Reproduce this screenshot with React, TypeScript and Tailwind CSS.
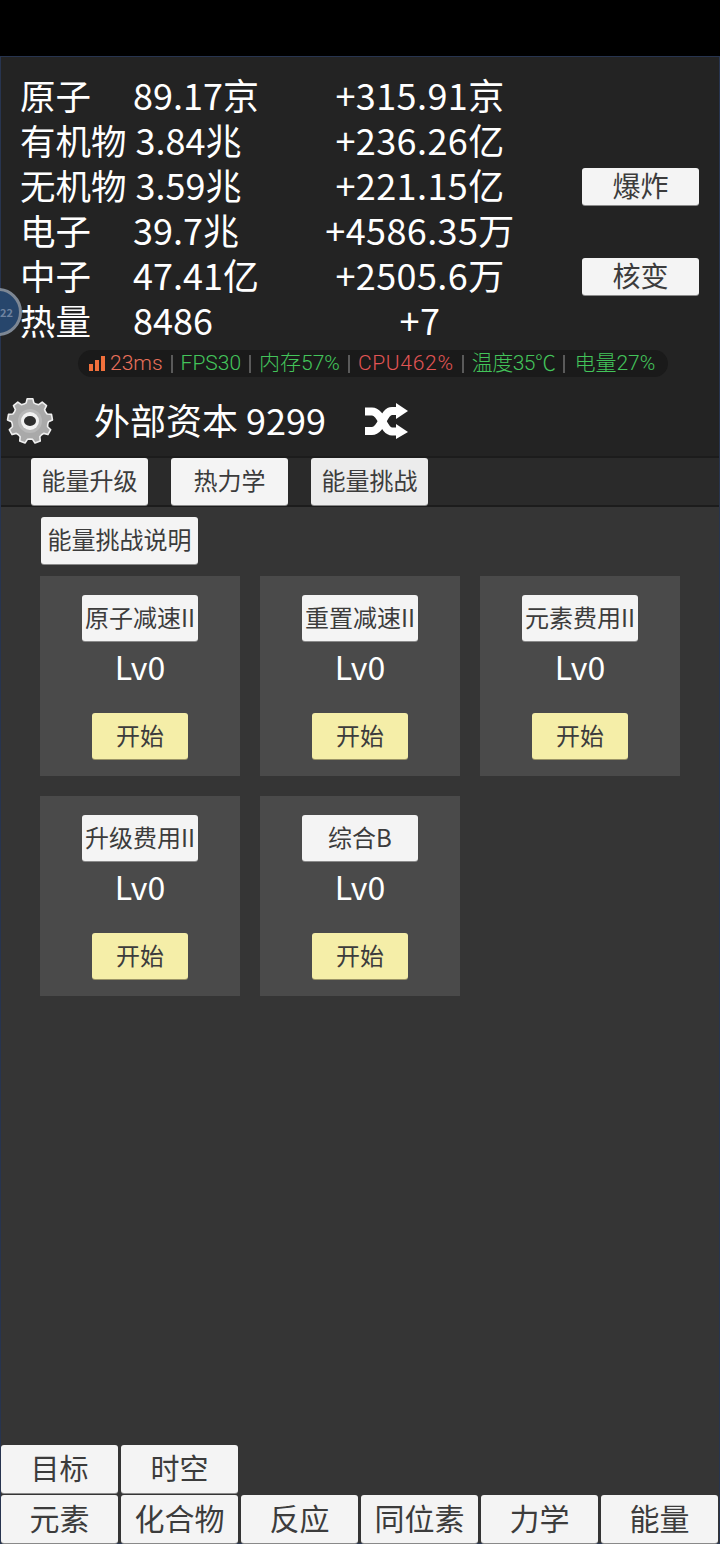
const font = { fontFamily: '"Noto Sans CJK SC", "Noto Sans", sans-serif' };
const statusFont = { fontFamily: 'Roboto, "Noto Sans CJK SC", sans-serif' };

const rows = [
  { label: "原子", value: "89.17京", rate: "+315.91京" },
  { label: "有机物", value: "3.84兆", rate: "+236.26亿" },
  { label: "无机物", value: "3.59兆", rate: "+221.15亿", action: "爆炸" },
  { label: "电子", value: "39.7兆", rate: "+4586.35万" },
  { label: "中子", value: "47.41亿", rate: "+2505.6万", action: "核变" },
  { label: "热量", value: "8486", rate: "+7" },
];

const cards = ["原子减速II", "重置减速II", "元素费用II", "升级费用II", "综合B"];

function gearPoints() {
  const pts: string[] = [];
  const teeth = 9;
  const s = (Math.PI * 2) / teeth;
  for (let i = 0; i < teeth; i++) {
    const a = i * s - Math.PI / 2;
    const p = (r: number, t: number) => {
      const x = 24 + r * Math.cos(a + t * s);
      const y = 24 + r * Math.sin(a + t * s);
      return x.toFixed(2) + "," + y.toFixed(2);
    };
    pts.push(p(18, -0.5), p(18.5, -0.3), p(22.5, -0.18), p(22.5, 0.18), p(18.5, 0.3));
  }
  return pts.join(" ");
}

function Gear() {
  return (
    <svg width="48" height="48" viewBox="0 0 48 48" className="mt-[4px]">
      <polygon points={gearPoints()} fill="#a9a9a9" stroke="#efefef" strokeWidth="1.6" strokeLinejoin="round" />
      <circle cx="24" cy="24" r="12" fill="#b8b8b8" />
      <circle cx="24" cy="24" r="9" fill="#f2f2f2" />
      <ellipse cx="24" cy="24" rx="6" ry="5" fill="#2e2e2e" />
    </svg>
  );
}

function Shuffle() {
  return (
    <svg width="44" height="36" viewBox="0 0 44 36" className="mt-[4px]">
      <path d="M0 8.5h7c10 0 11 20 20 20h6" fill="none" stroke="#fff" strokeWidth="8" />
      <path d="M0 28h7c10 0 11-20 20-20h6" fill="none" stroke="#fff" strokeWidth="8" />
      <path d="M31 0l12 8-12 8zM31 21l12 8-12 7z" fill="#fff" />
    </svg>
  );
}

function Btn({ children, className, color = "bg-[#f4f4f4]" }: { children: React.ReactNode; className: string; color?: string }) {
  return (
    <div className={"flex items-center justify-center rounded-[3px] pb-[3px] text-[#3c3c3c] whitespace-nowrap shadow-[0_1px_0_#8a8a8a] " + color + " " + className}>
      {children}
    </div>
  );
}

function Sep() {
  return <span className="mx-[8px] h-[18px] w-[2px] bg-[#5a5a5a]" />;
}

export default function App() {
  return (
    <div className="relative flex h-[1544px] w-[720px] flex-col overflow-hidden bg-black" style={font}>
      <div className="h-[56px] shrink-0 bg-black" />
      <div className="flex min-h-0 flex-1 flex-col border border-[#27344f] bg-[#232323]">
        <div className="flex flex-col pt-[15px]">
          {rows.map((r) => (
            <div key={r.label} className="flex h-[45px] items-center pl-[19px] text-[36px] leading-[45px] text-white">
              <div className="flex w-[283px] items-center">
                <div className="min-w-[113px] whitespace-nowrap pr-[9px] text-[35.5px]">{r.label}</div>
                <div className="whitespace-nowrap">{r.value}</div>
              </div>
              <div className="ml-[2px] w-[230px] whitespace-nowrap text-center tracking-[0.4px]">{r.rate}</div>
              {r.action ? (
                <Btn className="ml-[47px] mt-[4px] h-[37px] w-[117px] text-[28px]">{r.action}</Btn>
              ) : null}
            </div>
          ))}
        </div>

        <div className="ml-[77px] mt-[8px] flex h-[27px] w-[590px] items-center whitespace-nowrap rounded-full bg-[#1a1a1a] pl-[11px] text-[21px] font-light" style={statusFont}>
          <svg width="17" height="15" viewBox="0 0 17 15" className="mr-[4px]">
            <rect x="0" y="8" width="4" height="7" fill="#f0703c" />
            <rect x="6" y="4" width="4" height="11" fill="#f0703c" />
            <rect x="12" y="0" width="4" height="15" fill="#f0703c" />
          </svg>
          <span className="text-[#e8705a]">23ms</span>
          <Sep />
          <span className="text-[#43c45a]">FPS30</span>
          <Sep />
          <span className="text-[#43c45a]">内存57%</span>
          <Sep />
          <span className="tracking-[0.7px] text-[#e25555]">CPU462%</span>
          <Sep />
          <span className="tracking-[-0.5px] text-[#43c45a]">温度35℃</span>
          <Sep />
          <span className="ml-[1px] text-[#43c45a]">电量27%</span>
        </div>

        <div className="flex h-[79px] items-center pl-[5px] pt-[5px]">
          <Gear />
          <span className="ml-[40px] text-[36px] leading-[45px] text-white">外部资本 9299</span>
          <span className="ml-[39px]"><Shuffle /></span>
        </div>

        <div className="flex h-[51px] gap-[23px] border-y-[2px] border-[#1c1c1c] bg-[#2a2a2a] pl-[30px]">
          <Btn className="h-[47px] w-[117px] text-[24px]">能量升级</Btn>
          <Btn className="h-[47px] w-[117px] text-[24px]">热力学</Btn>
          <Btn color="bg-[#ececec]" className="h-[47px] w-[117px] text-[24px]">能量挑战</Btn>
        </div>

        <div className="flex min-h-0 flex-1 flex-col bg-[#353535]">
          <div className="pl-[40px] pt-[10px]">
            <Btn className="h-[47px] w-[157px] text-[24px]">能量挑战说明</Btn>
          </div>
          <div className="mt-[12px] grid flex-1 auto-rows-[200px] grid-cols-[200px_200px_200px] content-start gap-[20px] pl-[39px]">
            {cards.map((c) => (
              <div key={c} className="flex flex-col items-center bg-[#4a4a4a] pt-[19px]">
                <Btn className="h-[46px] w-[116px] text-[24px]">{c}</Btn>
                <div className="mb-[27px] mt-[5px] text-[32px] leading-[40px] text-white">Lv0</div>
                <Btn color="bg-[#f5eea8]" className="h-[46px] w-[96px] text-[24px] shadow-[0_1px_0_#9b9468]">开始</Btn>
              </div>
            ))}
          </div>
          <div className="flex gap-[3px] pb-[2px]">
            {["目标", "时空"].map((t) => (
              <Btn key={t} className="h-[48px] w-[117px] text-[29px]">{t}</Btn>
            ))}
          </div>
          <div className="flex gap-[3px]">
            {["元素", "化合物", "反应", "同位素", "力学", "能量"].map((t) => (
              <Btn key={t} className="h-[48px] w-[117px] text-[30px]">{t}</Btn>
            ))}
          </div>
        </div>
      </div>

      <div className="absolute left-[-26px] top-[288px] flex h-[48px] w-[48px] items-center justify-end rounded-full border-[3px] border-[#7d8794] bg-[#27466c] pr-[6px] text-[11px] font-bold text-[#6f83a0]">
        22
      </div>
    </div>
  );
}
